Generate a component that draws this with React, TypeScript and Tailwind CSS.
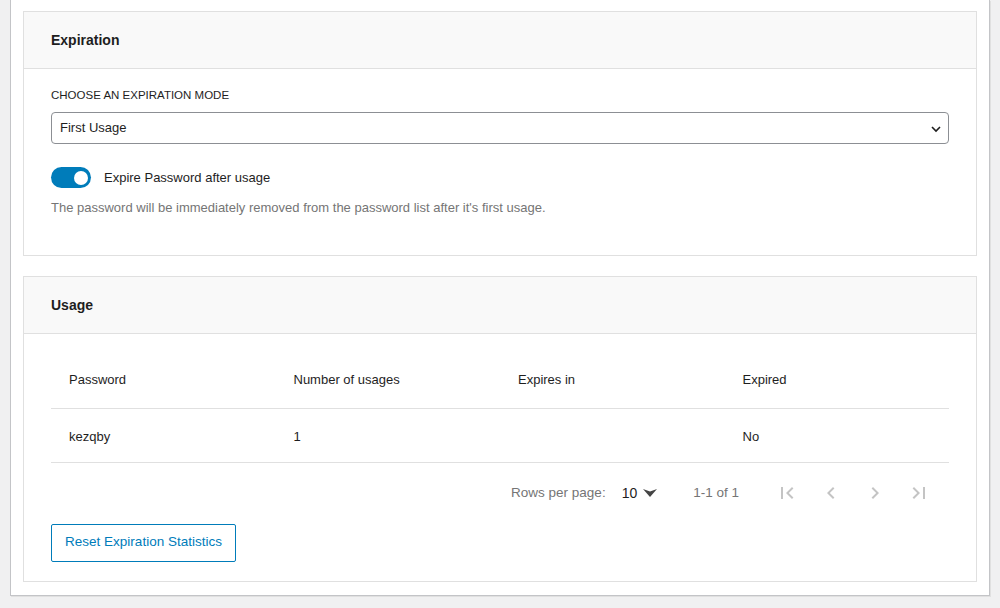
import React, {useState} from 'react';

// pagination icon paths (material style)
const FirstPageIcon = () => (
    <svg width="24" height="24" viewBox="0 0 24 24" fill="currentColor">
        <path d="M18.41 16.59 13.82 12l4.59-4.59L17 6l-6 6 6 6zM6 6h2v12H6z"/>
    </svg>
);
const PrevIcon = () => (
    <svg width="24" height="24" viewBox="0 0 24 24" fill="currentColor">
        <path d="M15.41 7.41 14 6l-6 6 6 6 1.41-1.41L10.83 12z"/>
    </svg>
);
const NextIcon = () => (
    <svg width="24" height="24" viewBox="0 0 24 24" fill="currentColor">
        <path d="M10 6 8.59 7.41 13.17 12l-4.58 4.59L10 18l6-6z"/>
    </svg>
);
const LastPageIcon = () => (
    <svg width="24" height="24" viewBox="0 0 24 24" fill="currentColor">
        <path d="M5.59 7.41 10.18 12l-4.59 4.59L7 18l6-6-6-6zM16 6h2v12h-2z"/>
    </svg>
);

function Card({title, children}: {title: string; children: React.ReactNode}) {
    return (
        <div className="border border-[#e0e0e0] bg-white">
            <div className="h-[57px] flex items-center px-[27px] bg-[#f9f9f9] border-b border-[#e0e0e0]">
                <h2 className="text-[14px] font-semibold text-[#1e1e1e]">{title}</h2>
            </div>
            {children}
        </div>
    );
}

export default function App() {
    const [expire, setExpire] = useState(true);

    const rows = [
        {password: 'kezqby', usages: '1', expiresIn: '', expired: 'No'},
    ];

    return (
        <div className="min-h-screen bg-[#f0f0f1] px-[10px] text-[13px] text-[#1e1e1e]"
             style={{fontFamily: '"Liberation Sans", Arial, sans-serif'}}>
            <div className="bg-white border-x border-b border-[#c3c4c7] shadow-[1px_1px_0_#e0e0e0] pt-[11px] pb-[13px] px-[12px] flex flex-col gap-[20px]">
                <Card title="Expiration">
                    <div className="px-[27px] pt-[18px] pb-[38px]">
                        <label className="block text-[11.5px] uppercase text-[#1e1e1e] leading-[16px] mb-[9px]">
                            Choose an expiration mode
                        </label>
                        <div className="relative h-[32px] border border-[#8c8f94] rounded-[4px] flex items-center pl-[8px]">
                            <span>First Usage</span>
                            <svg className="absolute right-[6px] top-[10px]" width="12" height="12" viewBox="0 0 12 12">
                                <path d="M2 4 6 8 10 4" fill="none" stroke="#1e1e1e" strokeWidth="1.6"/>
                            </svg>
                        </div>
                        <div className="flex items-center gap-[13px] mt-[23px]">
                            <button onClick={() => setExpire(!expire)}
                                    className={`w-[40px] h-[21px] rounded-full flex items-center px-[3px] ${expire ? 'bg-[#007cba] justify-end' : 'bg-[#949494] justify-start'}`}>
                                <span className="w-[14px] h-[14px] rounded-full bg-white"/>
                            </button>
                            <span>Expire Password after usage</span>
                        </div>
                        <p className="mt-[11px] text-[#757575] leading-[18px]">
                            The password will be immediately removed from the password list after it's first usage.
                        </p>
                    </div>
                </Card>

                <Card title="Usage">
                    <div className="px-[27px] pt-[18px] pb-[19px]">
                        <table className="w-full table-fixed border-collapse">
                            <thead>
                            <tr className="h-[56px] border-b border-[#e0e0e0]">
                                <th className="text-left font-normal px-[18px]">Password</th>
                                <th className="text-left font-normal px-[18px]">Number of usages</th>
                                <th className="text-left font-normal px-[18px]">Expires in</th>
                                <th className="text-left font-normal px-[18px]">Expired</th>
                            </tr>
                            </thead>
                            <tbody>
                            {rows.map(r => (
                                <tr key={r.password} className="h-[54px] border-b border-[#e0e0e0]">
                                    <td className="px-[18px] pt-[3px]">{r.password}</td>
                                    <td className="px-[18px] pt-[3px]">{r.usages}</td>
                                    <td className="px-[18px] pt-[3px]">{r.expiresIn}</td>
                                    <td className="px-[18px] pt-[3px]">{r.expired}</td>
                                </tr>
                            ))}
                            </tbody>
                        </table>
                        <div className="h-[61px] flex items-center justify-end pr-[18px] text-[#757575]">
                            <span className="text-[13.5px]">Rows per page:</span>
                            <div className="flex items-center ml-[16px] text-[#1e1e1e]">
                                <span className="text-[14px]">10</span>
                                <svg className="ml-[6px]" width="14" height="10" viewBox="0 0 14 10">
                                    <path d="M0 1 7 9 14 1 7 3.5z" fill="#444"/>
                                </svg>
                            </div>
                            <span className="ml-[36px] mr-[36px] text-[13.5px]">1-1 of 1</span>
                            <div className="flex items-center gap-[20px] text-[#c4c4c4]">
                                <FirstPageIcon/>
                                <PrevIcon/>
                                <NextIcon/>
                                <LastPageIcon/>
                            </div>
                        </div>
                        <button className="h-[38px] w-[185px] border border-[#007cba] text-[#007cba] text-[13.5px] rounded-[2px]">
                            Reset Expiration Statistics
                        </button>
                    </div>
                </Card>
            </div>
        </div>
    );
}
